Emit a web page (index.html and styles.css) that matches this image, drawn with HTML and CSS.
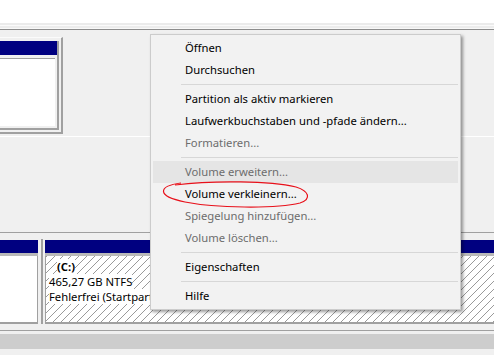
FILE: index.html
```html
<!DOCTYPE html>
<html>
<head>
  <meta charset="UTF-8">
  <title>Datenträgerverwaltung</title>
  <link rel="stylesheet" href="styles.css">
</head>
<body>
  <div id="fenster">
    <!-- Symbolleiste -->
    <div class="toolbar"></div>
    <div class="toolbar-rule"></div>

    <!-- Volumeliste -->
    <div class="list-pane">
      <div class="vol-frame">
        <div class="vol-box">
          <div class="vol-head"></div>
          <div class="vol-body"></div>
        </div>
      </div>
    </div>

    <div class="pane-gap"></div>

    <!-- Grafische Ansicht -->
    <div class="graph-pane">
      <div class="disk-row">
        <div class="disk-info">
          <div class="bar"></div>
          <div class="disk-body"></div>
        </div>
        <div class="disk-split"></div>
        <div class="partition">
          <div class="bar"></div>
          <div class="part-body">
            <span class="part-name">(C:)</span>
            <span>465,27 GB NTFS</span>
            <span>Fehlerfrei (Startpartition, Absturzabbild)</span>
          </div>
        </div>
      </div>
    </div>

    <!-- Bildlaufleiste -->
    <div class="hscroll-rule"></div>
    <div class="hscroll"></div>
  </div>

  <!-- Kontextmenü -->
  <ul class="menu">
    <li>Öffnen</li>
    <li>Durchsuchen</li>
    <li class="sep"></li>
    <li>Partition als aktiv markieren</li>
    <li>Laufwerkbuchstaben und -pfade ändern...</li>
    <li class="off">Formatieren...</li>
    <li class="sep"></li>
    <li class="off hot">Volume erweitern...</li>
    <li>Volume verkleinern...</li>
    <li class="off">Spiegelung hinzufügen...</li>
    <li class="off">Volume löschen...</li>
    <li class="sep"></li>
    <li>Eigenschaften</li>
    <li class="sep"></li>
    <li>Hilfe</li>
  </ul>

  <!-- Markierung (rot, von Hand gezogen) -->
  <svg class="kringel" width="160" height="36" viewBox="0 0 160 36">
    <path d="M26 7 C3 10 1 20 30 26 C60 32 120 33 145 27 C157 23 154 15 141 11 C115 5 60 4 20 9" />
  </svg>
</body>
</html>
```

FILE: styles.css
```css
* {
  box-sizing: border-box;
}

html, body {
  margin: 0;
  padding: 0;
}

body {
  position: relative;
  width: 494px;
  height: 355px;
  overflow: hidden;
  background: #f0f0f0;
  font-family: "Noto Sans", sans-serif;
  font-size: 11.25px;
  color: #000;
}

.toolbar {
  height: 23px;
  background: #fff;
}

.toolbar-rule {
  height: 7px;
  background: linear-gradient(#ebebeb 0 2px, #fafafa 2px 3px, #ececec 3px 5px, #f8f8f8 5px 6px, #8c8c8c 6px 7px);
}

/* obere Liste */
.list-pane {
  height: 107px;
  padding-top: 7px;
  border-bottom: 1px solid #fff;
}

.vol-frame {
  width: 63px;
  padding: 3px 2px 2px 0;
  border-top: 1px solid #fbfbfb;
  border-right: 2px solid #a0a0a0;
  border-bottom: 2px solid #a0a0a0;
}

.vol-box {
  border-right: 2px solid #a0a0a0;
  border-bottom: 2px solid #a0a0a0;
}

.vol-head {
  height: 14px;
  background: #000080;
}

.vol-body {
  height: 68px;
  margin: 3px 2px 2px 0;
  border-top: 1px solid #a0a0a0;
  background: #fff;
}

.pane-gap {
  height: 96px;
  border-bottom: 1px solid #a0a0a0;
}

/* Datenträgeransicht */
.graph-pane {
  padding-top: 7px;
}

.disk-row {
  display: flex;
  height: 84px;
}

.disk-info {
  width: 38px;
  display: flex;
  flex-direction: column;
}

.bar {
  height: 16px;
  background: #000080;
  border-bottom: 3px solid #b9b9b9;
}

.disk-body {
  flex: 1;
  background: #fff;
  border-right: 1px solid #a0a0a0;
  border-bottom: 2px solid #a0a0a0;
}

.disk-split {
  width: 2px;
  margin: -1px 2px 0 3px;
  background: #a0a0a0;
}

.partition {
  flex: 1;
  display: flex;
  flex-direction: column;
  min-width: 0;
}

.part-body {
  flex: 1;
  padding: 3px 0 0 3px;
  border-left: 1px solid #a0a0a0;
  border-bottom: 2px solid #a0a0a0;
  background: #fff repeating-linear-gradient(135deg, #9a9a9a 0 1px, #fff 1px 5.66px);
  overflow: hidden;
}

.part-body span {
  display: block;
  width: fit-content;
  line-height: 15px;
  white-space: nowrap;
  background: #fff;
}

.part-body .part-name {
  margin-left: 8px;
  font-weight: bold;
}

.hscroll-rule {
  height: 7px;
  border-bottom: 1px solid #a0a0a0;
}

.hscroll {
  height: 15px;
  margin-top: 3px;
  background: #cdcdcd;
}

/* Kontextmenü */
.menu {
  position: absolute;
  left: 150px;
  top: 34px;
  width: 311px;
  margin: 0;
  padding: 2px;
  list-style: none;
  background: #f2f2f2;
  border: 1px solid #cccccc;
  box-shadow: 2px 2px 3px rgba(0, 0, 0, 0.4);
}

.menu li {
  height: 22px;
  line-height: 22px;
  padding-left: 32px;
  white-space: nowrap;
}

.menu li.off {
  color: #6d6d6d;
}

.menu li.hot {
  background: #e5e5e5;
}

.menu li.sep {
  height: 1px;
  margin: 3px 0 3px 28px;
  padding: 0;
  background: #d7d7d7;
}

.kringel {
  position: absolute;
  left: 155px;
  top: 176px;
  overflow: visible;
}

.kringel path {
  fill: none;
  stroke: #e8101a;
  stroke-width: 1.2;
}
```
